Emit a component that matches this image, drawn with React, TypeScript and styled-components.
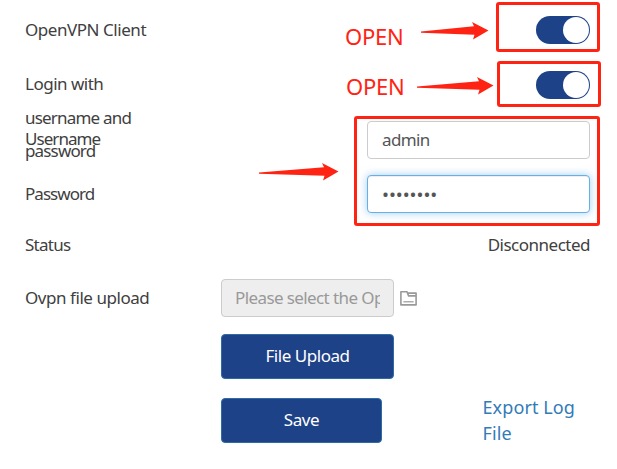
import React from "react";
import styled, { createGlobalStyle, css } from "styled-components";

const RED = "#ff2314";
const BLUE = "#1e4288";

const GlobalStyle = createGlobalStyle`
  *, *::before, *::after { box-sizing: border-box; }
  body {
    margin: 0;
    background: #fff;
    color: #404040;
    font-family: "Noto Sans", "Open Sans", sans-serif;
    font-size: 17px;
    overflow: hidden;
  }
`;

const Page = styled.main`
  position: relative;
  width: 617px;
  height: 469px;
  padding: 0 27px 0 25px;
  display: flex;
  flex-direction: column;
`;

const Row = styled.div<{ $height: number }>`
  flex: none;
  height: ${(p) => p.$height}px;
  display: grid;
  grid-template-columns: 196px 1fr;
  align-items: center;
`;

const Label = styled.label<{ $tracking?: number; $wrap?: boolean }>`
  line-height: 34px;
  padding-bottom: 1px;
  letter-spacing: ${(p) => p.$tracking ?? -0.45}px;
  white-space: nowrap;
  ${(p) =>
    p.$wrap &&
    css`
      align-self: start;
      height: 42px;
      padding-top: 7px;
      width: 120px;
      line-height: 33.5px;
    `}
`;

const Line = styled.span<{ $tracking: number }>`
  display: block;
  letter-spacing: ${(p) => p.$tracking}px;
`;

const Control = styled.div`
  display: flex;
  align-items: center;
  justify-content: flex-end;
`;

const UploadControl = styled(Control)`
  justify-content: flex-start;
  gap: 5px;
`;

const Switch = styled.button`
  width: 54px;
  height: 28px;
  padding: 1px;
  border: 0;
  border-radius: 14px;
  background: ${BLUE};
  display: flex;
  justify-content: flex-end;
`;

const Knob = styled.span`
  width: 26px;
  height: 26px;
  border-radius: 50%;
  background: #fff;
`;

const Field = styled.input<{ $active?: boolean }>`
  width: 223px;
  height: 38px;
  padding: 0 14px 1px;
  border: 1px solid #ccc;
  border-radius: 4px;
  outline: 0;
  background: #fff;
  color: #555;
  font: inherit;
  letter-spacing: -0.65px;
  ${(p) =>
    p.$active &&
    css`
      border-color: #66afe9;
      box-shadow: inset 0 1px 1px rgba(0, 0, 0, 0.075), 0 0 8px rgba(102, 175, 233, 0.6);
      font-size: 18.5px;
      letter-spacing: -0.05px;
    `}
`;

const FileField = styled(Field)`
  width: 173px;
  padding: 0 13px 1px;
  background: #eee;
  letter-spacing: -0.6px;
  &::placeholder { color: #999; opacity: 1; }
`;

const Status = styled.span`
  padding-bottom: 2px;
  letter-spacing: -0.5px;
`;

const Actions = styled.div`
  display: flex;
  align-items: flex-start;
  justify-content: space-between;
  padding: 10px 0 0 196px;
  & + & { padding: 19px 0 0 196px; }
`;

const Button = styled.button<{ $width: number }>`
  width: ${(p) => p.$width}px;
  height: 45px;
  padding: 0 0 2px;
  border: 1px solid #2e6da4;
  border-radius: 4px;
  background: ${BLUE};
  color: #fff;
  font: inherit;
  letter-spacing: -0.45px;
`;

const LogLink = styled.a`
  width: 107.5px;
  margin-top: -4px;
  color: #337ab7;
  font-size: 18px;
  line-height: 26px;
  letter-spacing: 0.1px;
`;

const Highlight = styled.div<{ $x: number; $y: number; $w: number; $h: number }>`
  position: absolute;
  left: ${(p) => p.$x}px;
  top: ${(p) => p.$y}px;
  width: ${(p) => p.$w}px;
  height: ${(p) => p.$h}px;
  border: 3px solid ${RED};
  border-radius: 3px;
  pointer-events: none;
`;

const Callout = styled.span<{ $x: number; $y: number }>`
  position: absolute;
  left: ${(p) => p.$x}px;
  top: ${(p) => p.$y}px;
  color: ${RED};
  font-size: 22px;
  line-height: 30px;
  letter-spacing: -0.2px;
`;

const ArrowSvg = styled.svg<{ $x: number; $y: number }>`
  position: absolute;
  left: ${(p) => p.$x}px;
  top: ${(p) => p.$y}px;
  fill: ${RED};
`;

function Arrow({ x, y, length }: { x: number; y: number; length: number }) {
  const l = length;
  return (
    <ArrowSvg $x={x} $y={y} width={l} height={18} viewBox={`0 0 ${l} 18`}>
      <path d={`M0 9.5 L${l - 14.5} 4.2 L${l - 16.5} 0 L${l} 8.6 L${l - 15.5} 17.6 L${l - 14} 12.8 L0 10.8 Z`} />
    </ArrowSvg>
  );
}

function Toggle({ id }: { id: string }) {
  return (
    <Switch id={id} type="button" role="switch" aria-checked="true">
      <Knob />
    </Switch>
  );
}

function FolderIcon() {
  return (
    <svg width="19" height="17" viewBox="0 0 19 17" fill="none" stroke="#999" strokeWidth="1.6" strokeLinejoin="round">
      <path d="M1.9 14.9 V1.7 H8 L9.6 5.9 H17.1 V14.9 Z M8.6 3.1 H17.1 V5.9" />
      <path d="M4.4 11.8 H14.6" strokeWidth="1.2" />
    </svg>
  );
}

export default function App() {
  return (
    <>
      <GlobalStyle />
      <Page>
        <Row $height={60}>
          <Label htmlFor="client">OpenVPN Client</Label>
          <Control><Toggle id="client" /></Control>
        </Row>
        <Row $height={50}>
          <Label htmlFor="login" $wrap>
            <Line $tracking={-0.5}>Login with</Line>
            <Line $tracking={-0.8}>username and</Line>
            <Line $tracking={-0.85}>password</Line>
          </Label>
          <Control><Toggle id="login" /></Control>
        </Row>
        <Row $height={59}>
          <Label htmlFor="user" $tracking={-0.95}>Username</Label>
          <Control><Field id="user" defaultValue="admin" /></Control>
        </Row>
        <Row $height={50}>
          <Label htmlFor="pass" $tracking={-0.95}>Password</Label>
          <Control><Field id="pass" type="password" defaultValue="password" $active /></Control>
        </Row>
        <Row $height={53}>
          <Label as="span" $tracking={-0.75}>Status</Label>
          <Control><Status>Disconnected</Status></Control>
        </Row>
        <Row $height={52}>
          <Label htmlFor="file">Ovpn file upload</Label>
          <UploadControl>
            <FileField id="file" disabled placeholder="Please select the Openvpn file" />
            <FolderIcon />
          </UploadControl>
        </Row>
        <Actions>
          <Button type="button" $width={173}>File Upload</Button>
        </Actions>
        <Actions>
          <Button type="button" $width={161}>Save</Button>
          <LogLink>Export Log File</LogLink>
        </Actions>

        <Highlight $x={496} $y={2} $w={104} $h={50} />
        <Highlight $x={497} $y={61} $w={104} $h={46} />
        <Highlight $x={354} $y={116} $w={246} $h={110} />
        <Callout $x={345} $y={21}>OPEN</Callout>
        <Callout $x={346} $y={71}>OPEN</Callout>
        <Arrow x={421} y={22} length={67.5} />
        <Arrow x={417} y={77} length={76.5} />
        <Arrow x={259} y={163} length={79.5} />
      </Page>
    </>
  );
}
